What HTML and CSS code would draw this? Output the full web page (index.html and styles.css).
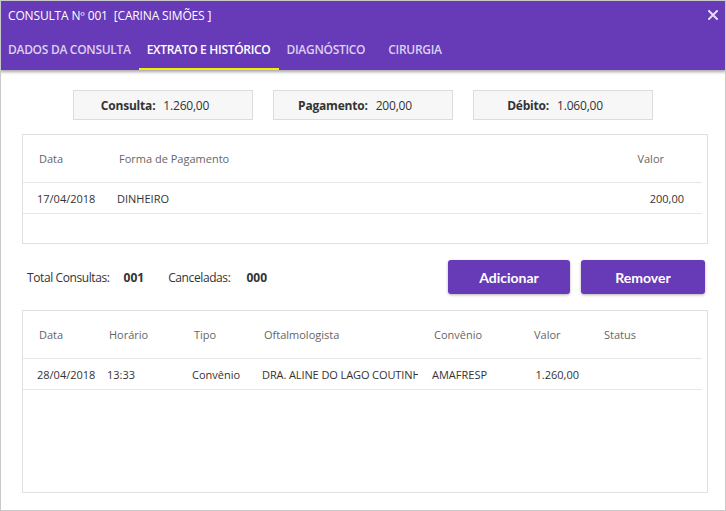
FILE: index.html
```html
<!DOCTYPE html>
<html lang="pt">
<head>
<meta charset="utf-8">
<link rel="stylesheet" href="styles.css">
</head>
<body>
<div class="window">
  <header class="header">
    <div class="titlebar">
      <span class="title">CONSULTA Nº 001&nbsp; [CARINA SIMÕES ]</span>
      <svg class="close" width="10" height="10" viewBox="0 0 10 10"><path d="M1 1L9 9M9 1L1 9" stroke="#e6dcf5" stroke-width="2" stroke-linecap="square"/></svg>
    </div>
    <nav class="tabs">
      <div class="tab">DADOS DA CONSULTA</div>
      <div class="tab active">EXTRATO E HISTÓRICO</div>
      <div class="tab">DIAGNÓSTICO</div>
      <div class="tab tab-last">CIRURGIA</div>
    </nav>
  </header>

  <section class="summary">
    <div class="sbox"><b>Consulta:</b><span>1.260,00</span></div>
    <div class="sbox"><b>Pagamento:</b><span>200,00</span></div>
    <div class="sbox"><b>Débito:</b><span>1.060,00</span></div>
  </section>

  <section class="table t1">
    <div class="thead">
      <div class="c1">Data</div>
      <div class="c2">Forma de Pagamento</div>
      <div class="c3">Valor</div>
    </div>
    <div class="trow">
      <div class="c1">17/04/2018</div>
      <div class="c2">DINHEIRO</div>
      <div class="c3">200,00</div>
    </div>
  </section>

  <section class="actions">
    <div class="totals">
      <span class="lbl">Total Consultas:</span><b class="num">001</b>
      <span class="lbl lbl2">Canceladas:</span><b class="num">000</b>
    </div>
    <div class="buttons">
      <button class="btn btn-add">Adicionar</button>
      <button class="btn btn-rem">Remover</button>
    </div>
  </section>

  <section class="table t2">
    <div class="thead">
      <div class="d1">Data</div>
      <div class="d2">Horário</div>
      <div class="d3">Tipo</div>
      <div class="d4">Oftalmologista</div>
      <div class="d5">Convênio</div>
      <div class="d6">Valor</div>
      <div class="d7">Status</div>
    </div>
    <div class="trow">
      <div class="d1">28/04/2018</div>
      <div class="d2">13:33</div>
      <div class="d3">Convênio</div>
      <div class="d4">DRA. ALINE DO LAGO COUTINHO</div>
      <div class="d5">AMAFRESP</div>
      <div class="d6">1.260,00</div>
      <div class="d7"></div>
    </div>
  </section>
</div>
</body>
</html>
```

FILE: styles.css
```css
* { box-sizing: border-box; }
html, body { margin: 0; padding: 0; background: #fff; }
body { font-family: "Open Sans", "Noto Sans", sans-serif; color: #333; }

.window {
  width: 726px;
  height: 511px;
  border: 1px solid #c9c9c9;
  background: #fff;
  overflow: hidden;
}

.header {
  height: 70px;
  background: #673ab7;
  box-shadow: 0 2px 3px rgba(0,0,0,0.35);
  margin: -1px -1px 0 -1px;
  position: relative;
}
.titlebar {
  height: 30px;
  display: flex;
  align-items: center;
  justify-content: space-between;
  padding: 0 8px 0 8px;
}
.title { color: #fff; font-size: 12px; letter-spacing: -0.15px; }
.close { margin-top: -1px; }

.tabs { display: flex; height: 40px; }
.tab {
  padding: 0 8px;
  height: 40px;
  line-height: 40px;
  font-size: 12px;
  font-weight: 600;
  color: #ddd0f0;
  letter-spacing: -0.3px;
  border-bottom: 2px solid transparent;
}
.tab.active { color: #fff; border-bottom-color: #f5ef00; }
.tab-last { margin-left: 7px; }

.summary {
  display: flex;
  justify-content: center;
  gap: 20px;
  margin-top: 20px;
}
.sbox {
  width: 180px;
  height: 30px;
  border: 1px solid #dcdcdc;
  background: #f7f7f7;
  display: flex;
  align-items: center;
  justify-content: center;
  gap: 8px;
  padding-right: 16px;
  font-size: 12px;
  color: #333;
}
.sbox b { font-weight: 700; letter-spacing: -0.2px; }
.sbox span { letter-spacing: -0.2px; }

.table {
  margin: 0 17px 0 21px;
  border: 1px solid #e0e0e0;
  font-size: 11px;
}
.t1 { margin-top: 14px; height: 110px; }
.t2 { margin-top: 16px; height: 183px; }
.thead {
  display: grid;
  height: 48px;
  align-items: center;
  color: #666;
  border-bottom: 1px solid #e6e6e6;
  margin-right: 5px;
}
.trow {
  display: grid;
  height: 31px;
  align-items: center;
  border-bottom: 1px solid #e6e6e6;
  margin-right: 5px;
  color: #333;
}
.t1 .thead, .t1 .trow { grid-template-columns: 80px 1fr 120px; }
.t1 .thead > div { padding-left: 16px; }
.t1 .trow > div { padding-left: 14px; }
.t1 .thead .c3 { text-align: right; padding-right: 38px; }
.t1 .trow .c3 { text-align: right; padding-right: 18px; }

.t2 .thead, .t2 .trow { grid-template-columns: 70px 85px 70px 170px 100px 70px 1fr; }
.t2 .thead > div { padding-left: 16px; }
.t2 .trow > div { padding-left: 14px; white-space: nowrap; overflow: hidden; }
.t2 .trow .d1 { overflow: visible; }
.t2 .trow .d4 { letter-spacing: -0.1px; }
.t2 .trow .d6 { text-align: right; padding-right: 9px; padding-left: 0; }

.actions {
  display: flex;
  justify-content: space-between;
  align-items: center;
  margin-top: 16px;
  padding: 0 20px 0 26px;
  height: 34px;
}
.totals { font-size: 12px; display: flex; align-items: center; }
.totals .lbl { color: #333; letter-spacing: -0.4px; }
.totals .num { font-weight: 700; margin-left: 14px; }
.totals .lbl2 { margin-left: 24px; }
.totals .lbl2 + .num { margin-left: 16px; }
.buttons { display: flex; gap: 11px; }
.btn {
  height: 34px;
  border: none;
  border-radius: 3px;
  background: #673ab7;
  color: #fff;
  font-family: Lato, "Open Sans", sans-serif;
  font-weight: 700;
  font-size: 14px;
  box-shadow: 0 1px 3px rgba(0,0,0,0.3);
  padding: 0;
}
.btn-add { width: 122px; }
.btn-rem { width: 124px; }
```
